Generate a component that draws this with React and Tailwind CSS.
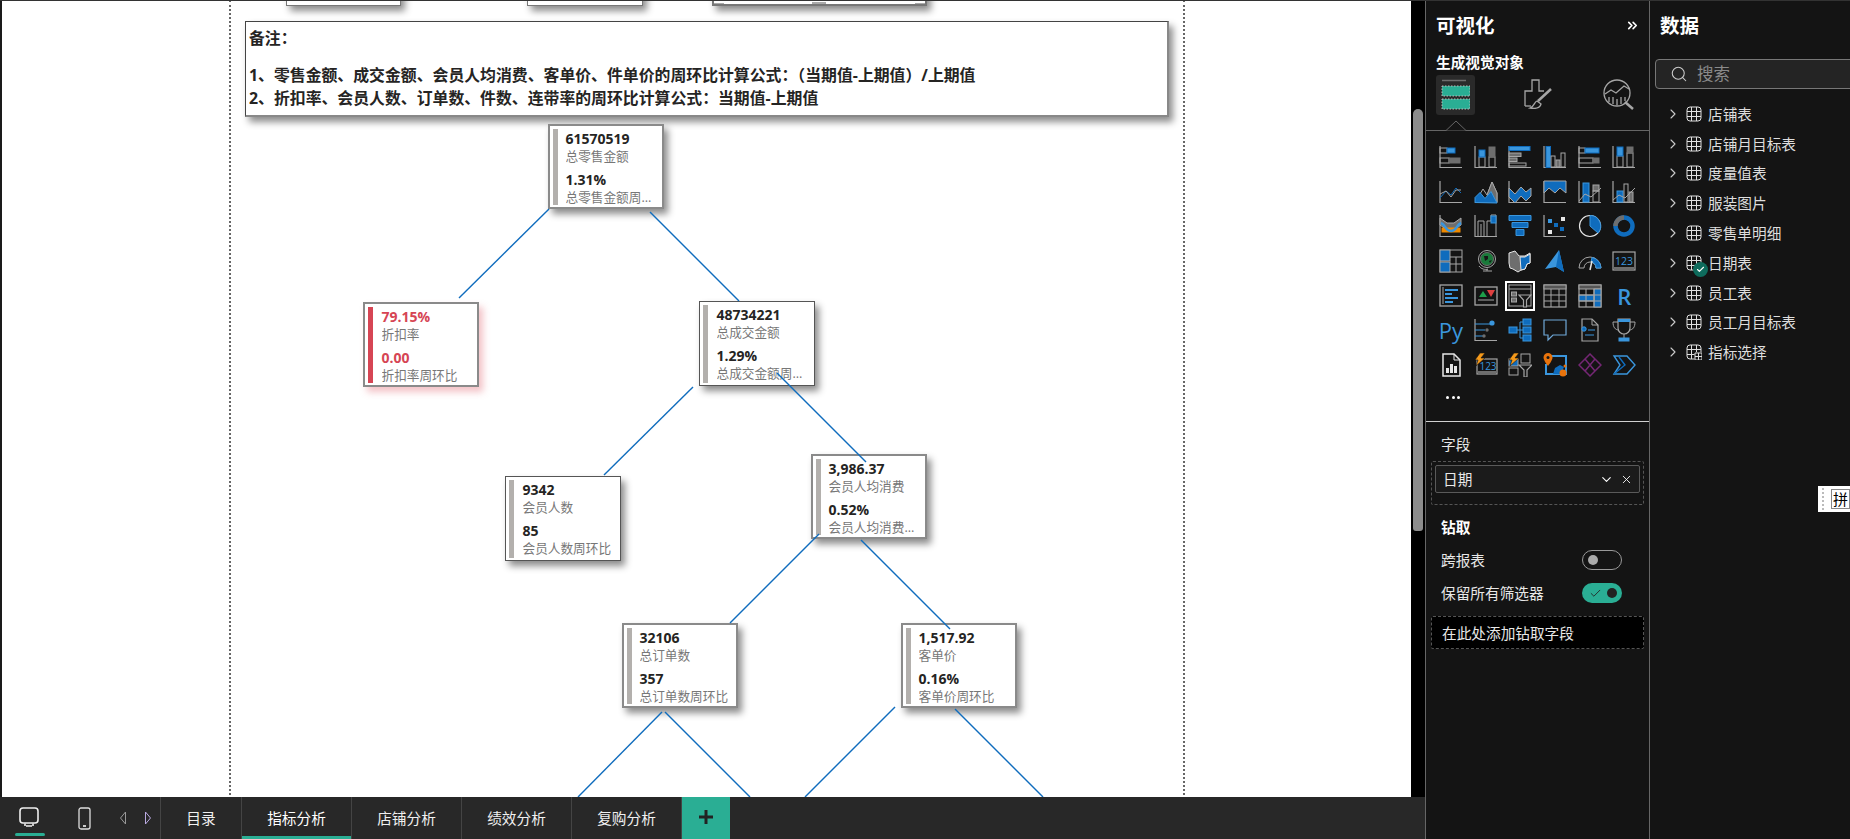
import React from 'react';
import { ChevronRight, ChevronDown, ChevronsRight, Search, X, Check } from 'lucide-react';

const G = '#a6a6a6';
const D = '#6e6e6e';
const B = '#0f6cbd';
const L = '#3a96dd';
const W = '#e6e6e6';

const nodes = [
  { pos: 'left-[548px] top-[124px]', tone: 'border-2 border-[#8a8a8a]', gap: 'ml-[8px]', v1: '61570519', l1: '总零售金额', v2: '1.31%', l2: '总零售金额周环比' },
  { pos: 'left-[363px] top-[302px]', tone: 'border-2 border-[#8a8a8a]', gap: 'ml-[9px]', red: true, v1: '79.15%', l1: '折扣率', v2: '0.00', l2: '折扣率周环比' },
  { pos: 'left-[699px] top-[301px]', tone: 'border border-[#555]', gap: 'ml-[9px]', v1: '48734221', l1: '总成交金额', v2: '1.29%', l2: '总成交金额周环比' },
  { pos: 'left-[505px] top-[476px]', tone: 'border border-[#555]', gap: 'ml-[9px]', v1: '9342', l1: '会员人数', v2: '85', l2: '会员人数周环比' },
  { pos: 'left-[811px] top-[454px]', tone: 'border-2 border-[#8a8a8a]', gap: 'ml-[8px]', v1: '3,986.37', l1: '会员人均消费', v2: '0.52%', l2: '会员人均消费周环比' },
  { pos: 'left-[622px] top-[623px]', tone: 'border-2 border-[#8a8a8a]', gap: 'ml-[8px]', v1: '32106', l1: '总订单数', v2: '357', l2: '总订单数周环比' },
  { pos: 'left-[901px] top-[623px]', tone: 'border-2 border-[#8a8a8a]', gap: 'ml-[8px]', v1: '1,517.92', l1: '客单价', v2: '0.16%', l2: '客单价周环比' },
];

const links = [
  [549, 209, 459, 298],
  [650, 212, 739, 301],
  [693, 387, 604, 475],
  [777, 373, 866, 462],
  [819, 534, 730, 623],
  [861, 540, 950, 629],
  [662, 712, 578, 797],
  [665, 712, 750, 797],
  [895, 707, 805, 797],
  [955, 709, 1043, 797],
];

const tables = ['店铺表', '店铺月目标表', '度量值表', '服装图片', '零售单明细', '日期表', '员工表', '员工月目标表', '指标选择'];
const tabs = ['目录', '指标分析', '店铺分析', '绩效分析', '复购分析'];

const Node = ({ n }) => {
  const valueColor = n.red ? 'text-[#d64554]' : 'text-[#252423]';
  return (
    <div className={`absolute ${n.pos} w-[116px] h-[85px] bg-white ${n.tone} ${n.red ? 'shadow-[4px_5px_7px_rgba(222,80,95,0.35)]' : 'shadow-[4px_5px_7px_rgba(0,0,0,0.45)]'}`}>
      <div className="flex h-full px-[2.5px] py-[2.5px]">
        <div className={`w-[5px] shrink-0 ${n.red ? 'bg-[#d64554]' : 'bg-[#b3b0ad]'}`} />
        <div className={`${n.gap} w-[92px]`}>
          <div className={`text-[14px] leading-[19px] font-bold ${valueColor}`}>{n.v1}</div>
          <div className="text-[12.67px] leading-[17.5px] text-[#777] truncate">{n.l1}</div>
          <div className={`mt-[4.5px] text-[14px] leading-[19px] font-bold ${valueColor}`}>{n.v2}</div>
          <div className="text-[12.67px] leading-[16px] text-[#777] truncate">{n.l2}</div>
        </div>
      </div>
    </div>
  );
};

const Ic = ({ children, axis = false }) => (
  <svg width="24" height="24" viewBox="0 0 24 24" fill="none" stroke={G} strokeWidth="1">
    {axis && <path d="M1 1v21.5h22" strokeWidth="1.2" />}
    {children}
  </svg>
);

const icons = [
  <Ic axis><rect x="1" y="3" width="7" height="5" /><rect x="8" y="3" width="8" height="5" fill={L} stroke={B} /><rect x="1" y="13" width="9" height="5" /><rect x="10" y="13" width="11" height="5" fill={D} stroke={D} /></Ic>,
  <Ic axis><rect x="5" y="12" width="6" height="10" /><rect x="5" y="5" width="6" height="7" fill={L} stroke={B} /><rect x="15" y="12" width="6" height="10" /><rect x="15" y="2" width="6" height="10" fill={D} stroke={D} /></Ic>,
  <Ic axis><rect x="1" y="1.5" width="21" height="4" fill={L} stroke={B} /><rect x="1" y="8" width="12" height="3.5" fill={D} /><rect x="1" y="13" width="8" height="3.5" fill={D} /><rect x="1" y="18" width="17" height="3" /></Ic>,
  <Ic axis><rect x="3" y="1.5" width="4.5" height="21" fill={L} stroke={B} /><rect x="8" y="11" width="4" height="11" /><rect x="13" y="15" width="4" height="7" fill={D} /><rect x="18" y="8" width="4" height="14" /></Ic>,
  <Ic axis><rect x="1" y="3" width="6" height="5" /><rect x="7" y="3" width="14" height="5" fill={L} stroke={B} /><rect x="1" y="13" width="14" height="5" /><rect x="15" y="13" width="6" height="5" fill={D} stroke={D} /></Ic>,
  <Ic axis><rect x="5" y="11" width="6" height="11" /><rect x="5" y="2" width="6" height="9" fill={L} stroke={B} /><rect x="15" y="8" width="6" height="14" /><rect x="15" y="2" width="6" height="6" fill={D} stroke={D} /></Ic>,

  <Ic axis><path d="M1 18l6-7 5 4 5-7 5 5" stroke={B} /><path d="M1 14l6-3 5 6 5-7 5 0" /></Ic>,
  <Ic><path d="M1 22.5L9 9l4 6 5-13 5 11v9.5z" stroke={G} /><path d="M13 15l5-13 5 11v9.5h-5z" fill={D} stroke={G} /><path d="M1 22.500v-5l5-5 5 6 6-7 6 11.500z" fill={B} stroke={L} /></Ic>,
  <Ic axis><path d="M1 8l6 6 6-7 5 5 5-4v8l-5 5-5-5-6 7-6-6z" fill={B} stroke={G} /></Ic>,
  <Ic axis><path d="M1 1h22v12l-6-5-5 5-6-5-5 5z" fill={B} stroke={G} /></Ic>,
  <Ic axis><rect x="5" y="3" width="6" height="19" fill={B} stroke={L} /><rect x="15" y="5" width="6" height="6" fill={D} /><rect x="15" y="11" width="6" height="11" /><path d="M1 21l6-7 6 3 10-9" /></Ic>,
  <Ic axis><rect x="5" y="11" width="6" height="11" fill={B} stroke={L} /><rect x="12" y="4" width="4" height="18" /><rect x="17" y="12" width="4" height="10" fill={D} /><path d="M1 20l6-5 6 3 10-10" /></Ic>,

  <Ic axis><path d="M1 4l7 5h7l7-5v7l-7 5H8l-7-5z" fill={D} stroke={G} /><rect x="3" y="14" width="18" height="4" fill="#f08a00" stroke="#f08a00" /><path d="M2 9c5 2 4 8 10 8s5-6 10-8" stroke={L} strokeWidth="2.5" /></Ic>,
  <Ic axis><path d="M4 22V7h6v15" /><path d="M7 22V10" /><path d="M13 22V7h4V1h5v21" /><rect x="17" y="2" width="5" height="7" fill={B} stroke={L} /></Ic>,
  <Ic><path d="M1 1.5h22v5H1z" fill={B} stroke={L} /><path d="M4 8.5h16v5H4z" fill={B} stroke={L} /><path d="M8 15.5h8v6H8z" fill={B} stroke={L} /></Ic>,
  <Ic axis><g stroke="none"><rect x="5" y="5" width="4" height="4" fill={L} /><rect x="11" y="9" width="4" height="4" fill={B} /><rect x="18" y="3" width="4" height="4" fill={W} /><rect x="5" y="16" width="4" height="4" fill={W} /><rect x="17" y="13" width="4" height="4" fill={B} /></g></Ic>,
  <Ic><circle cx="12" cy="12" r="10.5" stroke={W} strokeWidth="1.2" /><path d="M12 12V1.5A10.5 10.5 0 0 1 20 19z" fill={B} stroke={L} /></Ic>,
  <Ic><circle cx="12" cy="12" r="8.5" stroke={B} strokeWidth="4.5" /><path d="M3.5 12A8.5 8.5 0 0 1 12 3.5" stroke={D} strokeWidth="4.5" /></Ic>,

  <Ic><rect x="1" y="1" width="22" height="22" /><rect x="1" y="1" width="10" height="11" fill={B} /><rect x="1" y="13" width="10" height="10" fill={B} /><path d="M11 8h12M17 8v15M11 15h12" /></Ic>,
  <Ic><circle cx="13" cy="10" r="6.5" fill="#1a7a3a" stroke={D} /><circle cx="13" cy="10" r="8.5" /><path d="M10 7h4v3l-3 2zM15 12l3-1-2 3z" fill="#161616" stroke="none" /><path d="M5 17c2 3 6 4 9 3M9 22h9M13 20v2" /></Ic>,
  <Ic><path d="M1 4l6-2 4 5h6l5-3v10l-3 1-2 5-4 1-3 2-5-3-3-1-1-5z" fill={D} stroke={W} /><path d="M12 8h5l5-3v9l-3 1-2 5-4 1z" fill={B} stroke={W} /></Ic>,
  <Ic><path d="M16 1L2 20l11-2 8 5z" fill={L} stroke="none" /><path d="M16 1l-3 17 8 5z" fill={B} stroke="none" /></Ic>,
  <Ic><path d="M1 19A11 11 0 0 1 23 19h-5A6 6 0 0 0 6 19z" fill="none" /><path d="M14 8.5A11 11 0 0 1 23 19h-5a6 6 0 0 0-5-6z" fill={B} stroke={L} /><path d="M12 21l2-9" stroke={W} strokeWidth="1.5" /></Ic>,
  <Ic><rect x="1" y="3" width="22" height="18" stroke={G} strokeWidth="1.2" /><rect x="2" y="18" width="20" height="2.5" fill={D} stroke="none" /><text x="12" y="15.5" textAnchor="middle" fontSize="10.5" fill={L} stroke="none" fontFamily="Open Sans, sans-serif">123</text></Ic>,

  <Ic><rect x="1" y="1" width="22" height="21" strokeWidth="1.3" /><path d="M4 3v17" /><path d="M6 6h13M6 10h7M6 14h13M6 18h8" stroke={L} strokeWidth="1.8" /></Ic>,
  <Ic><rect x="1" y="3" width="22" height="18" strokeWidth="1.3" /><path d="M5 13l4-6 4 6z" fill="#1e9e4a" stroke="none" /><path d="M13 6h8l-4 7z" fill="#e04040" stroke="none" /><path d="M4 16h16" /></Ic>,
  <div className="w-[30px] h-[30px] border-2 border-white flex items-center justify-center">
    <svg width="24" height="24" viewBox="0 0 24 24" fill="none" stroke={G} strokeWidth="1">
      <rect x="1" y="1" width="22" height="21" /><path d="M1 5h22" /><rect x="3.5" y="8" width="5" height="4" fill={D} /><rect x="3.5" y="14" width="5" height="4" fill={D} /><path d="M11 11h12l-4.5 5v7h-3v-7z" fill="#161616" stroke={G} strokeWidth="1.2" />
    </svg>
  </div>,
  <Ic><rect x="1" y="1" width="22" height="22" strokeWidth="1.2" /><rect x="1" y="1" width="22" height="4" fill="#555" /><path d="M1 11h22M1 17h22M8 5v18M16 5v18" /></Ic>,
  <Ic><rect x="1" y="1" width="22" height="22" strokeWidth="1.2" /><rect x="1" y="1" width="22" height="4" fill="#555" /><rect x="16" y="5" width="7" height="18" fill={B} /><rect x="1" y="11" width="15" height="6" fill={B} /><path d="M1 11h22M1 17h22M8 5v18M16 5v18" /></Ic>,
  <span className="text-[22px] leading-none font-semibold text-[#3a96dd]">R</span>,

  <span className="text-[22px] leading-none font-normal text-[#3a96dd]">Py</span>,
  <Ic axis><path d="M1 6h15M1 12h10M1 18h8" stroke={L} /><circle cx="18" cy="5" r="2.6" fill={L} stroke="none" /><circle cx="13" cy="12" r="1.7" fill={D} stroke="none" /><circle cx="10" cy="18" r="1.7" fill={D} stroke="none" /></Ic>,
  <Ic><rect x="1" y="9" width="8" height="6" fill={B} stroke={L} /><rect x="15" y="1" width="8" height="6" fill={B} stroke={L} /><rect x="15" y="9" width="8" height="6" fill={B} stroke={L} /><rect x="15" y="17" width="8" height="6" fill={B} stroke={L} /><path d="M9 12h6M12 4v16M12 4h3M12 20h3" stroke={L} /></Ic>,
  <Ic><path d="M1 2h22v15H10l-5 5v-5H1z" stroke="#6fa8d8" strokeWidth="1.2" /></Ic>,
  <Ic><path d="M4 1h10l6 6v16H4z" strokeWidth="1.2" /><path d="M14 1v6h6" /><circle cx="6" cy="11" r="2.2" fill={B} stroke={L} /><path d="M10 12h7M7 17h9" stroke={L} /></Ic>,
  <Ic><path d="M6 1h12v9a6 6 0 0 1-12 0z" strokeWidth="1.2" /><rect x="6" y="1" width="12" height="3" fill={L} stroke="none" /><path d="M6 4H1c0 5 2 8 6 8M18 4h5c0 5-2 8-6 8M12 16v4" /><rect x="7" y="20" width="10" height="3" fill={L} stroke={L} /></Ic>,

  <Ic><path d="M4 1h11l6 6v16H4z" stroke={W} strokeWidth="1.5" /><path d="M15 1v6h6" stroke={W} /><g fill={W} stroke="none"><rect x="7" y="15" width="3" height="5" /><rect x="11" y="11" width="3" height="9" /><rect x="15" y="13" width="3" height="7" /></g></Ic>,
  <Ic><rect x="3" y="6" width="20" height="15" strokeWidth="1.2" /><rect x="4" y="18" width="18" height="2" fill={D} stroke="none" /><text x="14" y="16.5" textAnchor="middle" fontSize="10" fill={L} stroke="none" fontFamily="Open Sans, sans-serif">123</text><path d="M6 0h5L7 5h4L2 13l2-6H1z" fill="#f59a1b" stroke="#161616" strokeWidth="0.6" /></Ic>,
  <Ic><rect x="1" y="6" width="9" height="7" fill={B} /><rect x="1" y="15" width="9" height="7" /><rect x="13" y="1" width="9" height="9" /><path d="M11 12h13l-5 5v7h-3v-7z" fill="#161616" stroke={G} strokeWidth="1.2" /><path d="M6 0h5L7 5h4L2 13l2-6H1z" fill="#f59a1b" stroke="#161616" strokeWidth="0.6" /></Ic>,
  <Ic><path d="M6 3h17v18H3v-10" stroke={L} strokeWidth="2" /><path d="M10 21l2-6 5-3 4 2-3 7z" fill={B} stroke="none" /><path d="M5 0a4.500 4.500 0 0 1 4.500 4.500c0 3-4.500 8.500-4.500 8.500S.5 7.500.5 4.500A4.500 4.500 0 0 1 5 0z" fill="#e8730c" stroke="none" /><circle cx="5" cy="4.500" r="1.500" fill="#161616" stroke="none" /><circle cx="20" cy="20" r="3.500" fill="#e8730c" stroke="none" /><circle cx="22" cy="13" r="1.500" fill="#e8730c" stroke="none" /></Ic>,
  <Ic><g stroke="#742774" strokeWidth="1.5"><path d="M12 1l11 11-11 11L1 12z" /><path d="M7 6l10 12M17 6L7 18" /></g></Ic>,
  <Ic><path d="M2 3h13l8 9-8 9H2l6-9z" stroke={L} strokeWidth="1.4" /><path d="M2 21l11-9L7 4" stroke={B} strokeWidth="1.4" /></Ic>,
];

const BuildIcon = () => (
  <svg width="30" height="34" viewBox="0 0 30 34" fill="none">
    <path d="M2 2.500h24" stroke={D} strokeWidth="1.5" />
    <rect x="2" y="8" width="28" height="10" fill="#2aae94" stroke="#bbb" strokeDasharray="1.5 1.5" />
    <rect x="2" y="21" width="28" height="10" fill="#2aae94" stroke="#bbb" strokeDasharray="1.5 1.5" />
  </svg>
);

const FormatIcon = () => (
  <svg width="30" height="32" viewBox="0 0 30 32" fill="none" stroke={G} strokeWidth="1.3">
    <path d="M2 27V12h7V1h7v11h5" />
    <path d="M2 27h6" />
    <path d="M28 10L15 22" strokeWidth="2.500" />
    <path d="M14 22c-3 1-2 5-7 7 5 1 10 0 11-4z" />
  </svg>
);

const AnalyticsIcon = () => (
  <svg width="32" height="32" viewBox="0 0 32 32" fill="none" stroke={G} strokeWidth="1.3">
    <circle cx="14" cy="14" r="13" />
    <path d="M22 23l8 7" strokeWidth="2.500" />
    <path d="M2 15l6-4 5 3 8-7 5 3" />
    <path d="M6 18v5M10 18v7M14 20v6M18 18v7M22 18v4" />
  </svg>
);

const TableIcon = ({ calc }) => (
  <svg width="16" height="16" viewBox="0 0 16 16" fill="none" stroke="#e0e0e0" strokeWidth="1">
    <rect x="1" y="1" width="14" height="14" rx="3" />
    <path d="M1 5.500h14M1 10.500h14M5.500 1v14M10.500 1v14" />
    {calc && <rect x="8.500" y="8" width="7.500" height="8" fill="#141414" stroke="none" />}
    {calc && <path d="M9 9h7v7H9zM9 12.500h7M12.500 9v7" stroke="#e0e0e0" />}
  </svg>
);

const Toggle = ({ on }) =>
  on ? (
    <div className="w-[40px] h-[20px] rounded-full bg-[#2aae94] flex items-center justify-between pl-[7px] pr-[5px]">
      <Check size={13} strokeWidth={1.6} className="text-[#222]" />
      <div className="w-[10px] h-[10px] rounded-full bg-[#222]" />
    </div>
  ) : (
    <div className="w-[40px] h-[20px] rounded-full border border-[#999] flex items-center pl-[5px]">
      <div className="w-[10px] h-[10px] rounded-full bg-[#aaa]" />
    </div>
  );

export default function App() {
  return (
    <div className="w-[1850px] h-[839px] flex overflow-hidden bg-[#141414] border-t border-[#333] font-['Open_Sans','Noto_Sans_CJK_SC',sans-serif]">
      {/* report canvas */}
      <div className="w-[1425px] h-full flex flex-col shrink-0">
        <div className="flex-1 flex min-h-0">
          <div className="w-[2px] bg-[#1a1a1a]" />
          <div className="relative w-[1409px] bg-white overflow-hidden">
            <div className="absolute -left-[2px] -top-[1px] w-[1850px] h-[839px]">
              <div className="absolute left-[229px] top-0 h-full border-l-2 border-dotted border-[#666]" />
              <div className="absolute left-[1183px] top-0 h-full border-l-2 border-dotted border-[#666]" />

              <div className="absolute left-[286px] -top-[20px] w-[115px] h-[26px] bg-white border border-[#777] shadow-[4px_5px_7px_rgba(0,0,0,0.45)]" />
              <div className="absolute left-[527px] -top-[20px] w-[116px] h-[26px] bg-white border border-[#777] shadow-[4px_5px_7px_rgba(0,0,0,0.45)]" />
              <div className="absolute left-[712px] -top-[20px] w-[215px] h-[26px] bg-white border-2 border-[#777] shadow-[4px_5px_7px_rgba(0,0,0,0.45)]">
                <div className="absolute left-0 bottom-0 w-[10px] h-[1px] bg-[#aaa]" />
                <div className="absolute left-[98px] bottom-0 w-[14px] h-[2px] bg-[#aaa]" />
                <div className="absolute right-0 bottom-0 w-[10px] h-[1px] bg-[#aaa]" />
              </div>

              <div className="absolute left-[245px] top-[21px] w-[924px] h-[96px] bg-white border border-[#444] border-r-2 border-b-2 border-r-[#888] border-b-[#888] shadow-[4px_5px_7px_rgba(0,0,0,0.45)] pl-[3px] text-[15.87px] font-bold text-[#252423]">
                <div className="mt-[4px] leading-[24px]">备注：</div>
                <div className="mt-[14px] leading-[23px]">1、零售金额、成交金额、会员人均消费、客单价、件单价的周环比计算公式：（当期值-上期值）/上期值</div>
                <div className="leading-[23px]">2、折扣率、会员人数、订单数、件数、连带率的周环比计算公式：当期值-上期值</div>
              </div>

              {nodes.map(n => <Node key={n.v1} n={n} />)}

              <svg className="absolute left-0 top-0" width="1850" height="839">
                {links.map(([x1, y1, x2, y2]) => (
                  <line key={`${x1}-${y1}`} x1={x1} y1={y1} x2={x2} y2={y2} stroke="#0f6cbd" strokeWidth="1.4" />
                ))}
              </svg>
            </div>
          </div>
          <div className="relative w-[14px] bg-black">
            <div className="absolute left-[2px] top-[108px] w-[10px] h-[422px] rounded-t-[5px] rounded-b-[3px] bg-[#8c8c8c]" />
          </div>
        </div>

        {/* page tabs */}
        <div className="h-[42px] shrink-0 bg-[#282828] flex text-[14.67px] text-[#f0f0f0]">
          <div className="w-[161px] flex items-center border-r border-[#444] relative">
            <svg className="ml-[19px]" width="20" height="22" viewBox="0 0 20 22" fill="none" stroke="#eee" strokeWidth="1.6">
              <rect x="1" y="1" width="18" height="15" rx="3" />
              <path d="M7 19h6M6 16.500v2.500M14 16.500v2.500" />
            </svg>
            <div className="absolute left-[15px] bottom-[3px] w-[30px] h-[3px] rounded-full bg-[#2aae94]" />
            <svg className="ml-[39px]" width="13" height="23" viewBox="0 0 13 23" fill="none" stroke="#ddd" strokeWidth="1.3">
              <rect x="1" y="1" width="11" height="21" rx="2" />
              <path d="M5 19h3" strokeWidth="1.800" />
            </svg>
            <svg className="ml-[28px]" width="8" height="14" viewBox="0 0 8 14" fill="none" stroke="#999" strokeWidth="1">
              <path d="M6.500 1L1.500 7l5 6z" />
            </svg>
            <svg className="ml-[17px]" width="8" height="14" viewBox="0 0 8 14" fill="none" stroke="#b9a9e0" strokeWidth="1">
              <path d="M1.500 1l5 6-5 6z" />
            </svg>
          </div>
          {tabs.map((t, i) => (
            <div key={t} className={`relative flex items-center justify-center border-r border-[#444] ${i === 0 ? 'w-[81px]' : 'w-[110px]'} ${i === 1 ? 'text-white' : ''}`}>
              {t}
              {i === 1 && <div className="absolute left-0 right-0 bottom-0 h-[3px] bg-[#2aae94]" />}
            </div>
          ))}
          <div className="w-[48px] bg-[#2aae94] flex items-center justify-center">
            <svg width="14" height="14" viewBox="0 0 14 14" className="-mt-[2px]">
              <path d="M5.500 0h3v5.500H14v3H8.500V14h-3V8.500H0v-3h5.500z" fill="#222" />
            </svg>
          </div>
        </div>
      </div>

      {/* visualizations pane */}
      <div className="w-[225px] shrink-0 border-x border-[#666] flex flex-col text-[14.67px] text-[#e8e8e8]">
        <div className="h-[49px] flex items-center justify-between pl-[10px] pr-[9px]">
          <span className="text-[19.5px] font-bold text-white">可视化</span>
          <ChevronsRight size={15} strokeWidth={2.6} className="text-white" />
        </div>
        <div className="h-[23px] pl-[10px] flex items-center text-[14.67px] font-bold text-white">生成视觉对象</div>
        <div className="relative h-[58px] pt-[2px] border-b border-[#666]">
          <div className="flex items-center">
            <div className="ml-[10px] w-[39px] h-[40px] bg-[#2a2a2a] rounded-[3px] flex items-center justify-center pr-[2px]">
              <BuildIcon />
            </div>
            <div className="ml-[48px]"><FormatIcon /></div>
            <div className="ml-[50px]"><AnalyticsIcon /></div>
          </div>
          <svg className="absolute left-[19px] -bottom-[1px]" width="22" height="11" viewBox="0 0 22 11" fill="none">
            <path d="M0 10.500h1L11 1l10 9.500h1" fill="#141414" stroke="#666" />
          </svg>
        </div>
        <div className="mt-[9px] ml-[7.6px] grid grid-cols-[repeat(6,34.7px)] auto-rows-[34.6px]">
          {icons.map((ic, i) => (
            <div key={i} className="flex items-center justify-center">{ic}</div>
          ))}
        </div>
        <div className="h-[30px] pl-[20px] flex items-center gap-[2.5px] shrink-0">
          <div className="w-[3px] h-[3px] rounded-full bg-white" />
          <div className="w-[3px] h-[3px] rounded-full bg-white" />
          <div className="w-[3px] h-[3px] rounded-full bg-white" />
        </div>
        <div className="mt-[9px] h-[1px] bg-[#d0d0d0]" />

        <div className="pl-[15px] h-[22px] mt-[11px] flex items-center">字段</div>
        <div className="mx-[5px] mt-[6px] h-[44px] border border-dashed border-[#555] rounded-[2px] p-[3px]">
          <div className="h-[28px] bg-[#1b1b1b] border border-[#5a5a5a] rounded-[2px] flex items-center pl-[7px] pr-[6px]">
            <span className="flex-1">日期</span>
            <ChevronDown size={15} strokeWidth={1.8} className="text-white" />
            <X size={13} strokeWidth={1.6} className="text-white ml-[6px]" />
          </div>
        </div>
        <div className="pl-[15px] mt-[11px] h-[22px] flex items-center font-bold text-white">钻取</div>
        <div className="pl-[15px] pr-[27px] mt-[12px] h-[20px] flex items-center justify-between">
          <span>跨报表</span>
          <Toggle />
        </div>
        <div className="pl-[15px] pr-[27px] mt-[13px] h-[20px] flex items-center justify-between">
          <span>保留所有筛选器</span>
          <Toggle on />
        </div>
        <div className="mx-[5px] mt-[13px] h-[33px] bg-black border border-dashed border-[#555] rounded-[2px] flex items-center pl-[10px]">在此处添加钻取字段</div>
      </div>

      {/* data pane */}
      <div className="relative flex-1 min-w-0 overflow-hidden text-[14.67px] text-[#dedede]">
        <div className="h-[49px] flex items-center pl-[10px] text-[19.5px] font-bold text-white">数据</div>
        <div className="ml-[5px] mt-[9px] w-[220px] h-[30px] bg-[#242424] border border-[#777] rounded-[4px] flex items-center pl-[14px]">
          <Search size={18} strokeWidth={1.4} className="text-[#ccc]" />
          <span className="ml-[9px] text-[16.5px] text-[#8a8a8a]">搜索</span>
        </div>
        <div className="mt-[10px]">
          {tables.map((t, i) => (
            <div key={t} className="relative h-[29.8px] flex items-center pl-[15px]">
              <ChevronRight size={16} strokeWidth={1.6} className="text-[#ccc]" />
              <div className="relative ml-[5px] w-[16px] h-[16px]">
                <TableIcon calc={i === 8} />
                {i === 5 && (
                  <div className="absolute left-[7px] top-[7px] w-[15px] h-[15px] rounded-full bg-[#0e6b5c] flex items-center justify-center">
                    <Check size={9} strokeWidth={3} className="text-white" />
                  </div>
                )}
              </div>
              <span className="ml-[6px]">{t}</span>
            </div>
          ))}
        </div>
        <div className="absolute left-[168px] top-[485px] w-[32px] h-[26px] bg-white flex items-center pl-[4px]">
          <div className="w-[3px] h-[22px] border-l-2 border-dotted border-[#bbb]" />
          <div className="ml-[6px] h-[20px] w-[22px] border border-[#888] text-[15px] leading-[18px] text-black text-center">拼</div>
        </div>
      </div>
    </div>
  );
}
